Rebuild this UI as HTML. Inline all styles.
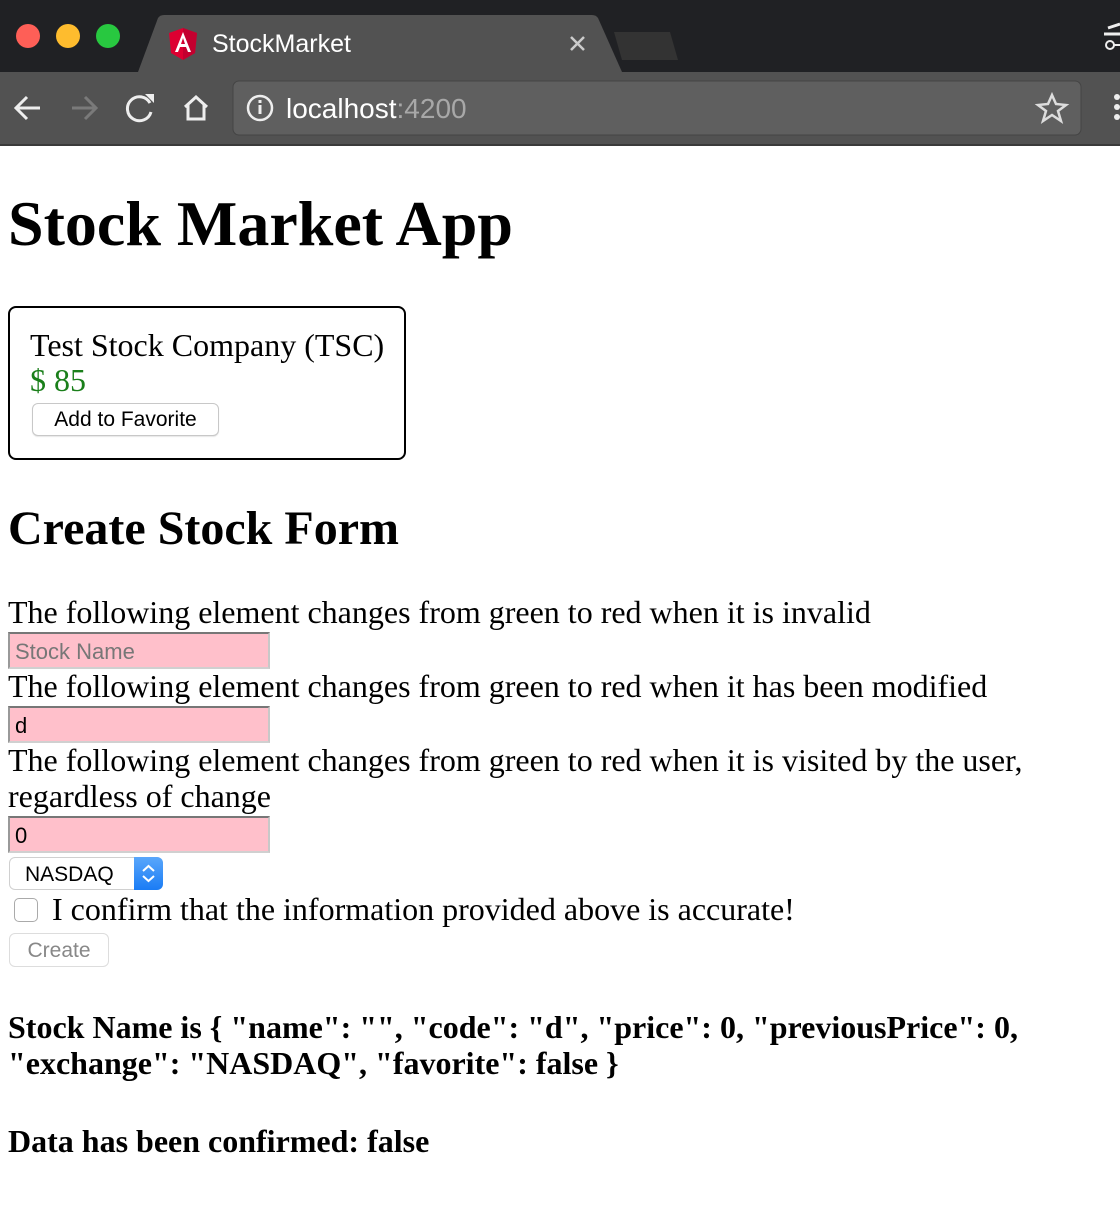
<!DOCTYPE html>
<html><head><meta charset="utf-8"><style>
*{margin:0;padding:0;box-sizing:border-box}
html,body{width:1120px;height:1232px;background:#fff;overflow:hidden;position:relative;font-family:"Liberation Serif",serif;color:#000}
.a{position:absolute;white-space:nowrap}
.t{font-size:32px;line-height:36px}
.b{font-weight:bold}
.inp{position:absolute;left:8px;width:262px;height:37px;background:#ffc0cb;border:2px solid #8a8a8a;border-top-color:#777;border-left-color:#999;border-right-color:#c8c8c8;border-bottom-color:#d0d0d0;font-family:"Liberation Sans",sans-serif;font-size:22px;line-height:35px;padding-left:5px}
.ui{font-family:"Liberation Sans",sans-serif}
</style></head><body>
<div class="a" style="left:0;top:0;width:1120px;height:72px;background:#202124"></div>
<svg class="a" style="left:0;top:0" width="1120" height="146">
<path d="M138 72 L158 18 Q160 15 164 15 L592 15 Q596 15 598 18 L622 72 Z" fill="#525252"/>
<path d="M614 32 L670 32 L678 60 L622 60 Z" fill="#333"/>
<rect x="0" y="72" width="1120" height="74" fill="#525252"/>
<rect x="0" y="144" width="1120" height="2" fill="#3a3a3a"/>
<rect x="233" y="81" width="848" height="54" rx="6" fill="#5f5f5f" stroke="#444" stroke-width="1"/>
<circle cx="28" cy="36" r="12" fill="#fe5f57"/>
<circle cx="68" cy="36" r="12" fill="#febc2e"/>
<circle cx="108" cy="36" r="12" fill="#28c840"/>
<path d="M183 28 L197 33 L195 53 L183 60 L171 53 L169 33 Z" fill="#dd0031"/>
<path d="M183 28 L197 33 L195 53 L183 60 Z" fill="#c3002f"/>
<path d="M183 32 L175 52 L178 52 L180 47 L186 47 L188 52 L191 52 Z M181 44 L183 38 L185 44Z" fill="#fff"/>
<path d="M571 37 L584 50 M584 37 L571 50" stroke="#ccc" stroke-width="2.5"/>
<path d="M40 108 L16 108 M27 97 L16 108 L27 119" stroke="#eee" stroke-width="3" fill="none"/>
<path d="M72 108 L96 108 M85 97 L96 108 L85 119" stroke="#7a7a7a" stroke-width="3" fill="none"/>
<path d="M150 103 A12 12 0 1 0 151 112" stroke="#eee" stroke-width="3" fill="none"/>
<path d="M145 94 L154 94 L154 103 Z" fill="#eee"/>
<path d="M185 107 L196 97 L207 107 M188 105 L188 119 L204 119 L204 105" stroke="#eee" stroke-width="3" fill="none"/>
<circle cx="260" cy="108" r="12" stroke="#eee" stroke-width="2.5" fill="none"/>
<rect x="258.5" y="105" width="3" height="9" fill="#eee"/><rect x="258.5" y="100" width="3" height="3" fill="#eee"/>
<path d="M1052 95 L1056 104 L1066 105 L1058 111 L1061 121 L1052 115 L1043 121 L1046 111 L1038 105 L1048 104 Z" stroke="#ddd" stroke-width="2.5" fill="none"/>
<circle cx="1117" cy="97" r="3" fill="#eee"/><circle cx="1117" cy="107" r="3" fill="#eee"/><circle cx="1117" cy="117" r="3" fill="#eee"/>
<path d="M1104 34 L1120 34 M1108 28 L1120 24" stroke="#eee" stroke-width="3"/>
<circle cx="1110" cy="45" r="4" stroke="#eee" stroke-width="2" fill="none"/><path d="M1114 45 L1120 45" stroke="#eee" stroke-width="2"/>
</svg>
<div class="a ui" style="left:212px;top:29px;font-size:25px;line-height:30px;color:#fff">StockMarket</div>
<div class="a ui" style="left:286px;top:93px;font-size:28px;line-height:32px;color:#fff">localhost<span style="color:#a8a8a8">:4200</span></div>

<div class="a b" style="left:8px;top:192px;font-size:64px;line-height:64px">Stock Market App</div>
<div class="a" style="left:8px;top:306px;width:398px;height:154px;border:2px solid #000;border-radius:8px"></div>
<div class="a t" style="left:30px;top:327px">Test Stock Company (TSC)</div>
<div class="a t" style="left:30px;top:362px;color:#1a7f1a">$ 85</div>
<div class="a ui" style="left:32px;top:403px;width:187px;height:33px;border:1px solid #c8c8c8;border-radius:6px;background:#fff;font-size:21px;line-height:32px;text-align:center;box-shadow:0 1px 1px rgba(0,0,0,.1)">Add to Favorite</div>

<div class="a b" style="left:8px;top:505px;font-size:48px;line-height:48px">Create Stock Form</div>
<div class="a t" style="left:8px;top:594px">The following element changes from green to red when it is invalid</div>
<div class="inp" style="top:632px;color:#777">Stock Name</div>
<div class="a t" style="left:8px;top:668px">The following element changes from green to red when it has been modified</div>
<div class="inp" style="top:706px">d</div>
<div class="a t" style="left:8px;top:742px">The following element changes from green to red when it is visited by the user,</div>
<div class="a t" style="left:8px;top:778px">regardless of change</div>
<div class="inp" style="top:816px">0</div>
<div class="a ui" style="left:9px;top:857px;width:154px;height:33px;border:1px solid #d0d0d0;border-radius:6px;background:#fff;font-size:21px;line-height:33px;padding-left:15px">NASDAQ</div>
<div class="a" style="left:134px;top:857px;width:29px;height:33px;background:linear-gradient(#5aa7fb,#1a7cf5);border-radius:0 6px 6px 0"></div>
<svg class="a" style="left:134px;top:857px" width="29" height="33"><path d="M9 14 L14.5 9 L20 14 M9 19 L14.5 24 L20 19" stroke="#fff" stroke-width="2" fill="none"/></svg>
<div class="a" style="left:14px;top:898px;width:24px;height:24px;border:1px solid #aaa;border-radius:5px;background:#fff"></div>
<div class="a t" style="left:52px;top:891px">I confirm that the information provided above is accurate!</div>
<div class="a ui" style="left:9px;top:933px;width:100px;height:34px;border:1px solid #ddd;border-radius:6px;background:#fff;font-size:21px;line-height:34px;text-align:center;color:#888">Create</div>

<div class="a t b" style="left:8px;top:1009px">Stock Name is { "name": "", "code": "d", "price": 0, "previousPrice": 0,</div>
<div class="a t b" style="left:8px;top:1045px">"exchange": "NASDAQ", "favorite": false }</div>
<div class="a t b" style="left:8px;top:1123px">Data has been confirmed: false</div>
</body></html>
